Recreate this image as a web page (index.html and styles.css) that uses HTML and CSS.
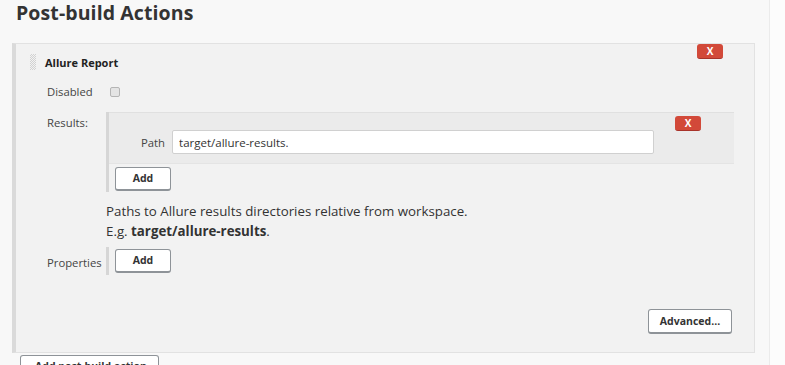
FILE: index.html
```html
<!DOCTYPE html>
<html lang="en">
<head>
  <meta charset="UTF-8">
  <title>Post-build Actions</title>
  <link rel="stylesheet" href="styles.css">
</head>
<body>
  <div class="page">
    <h1>Post-build Actions</h1>
    <div class="section">
      <button class="del del-top" type="button">X</button>
      <div class="section-head">
        <span class="handle"></span>
        <b>Allure Report</b>
      </div>
      <div class="rows">
        <div class="lbl lbl-disabled">Disabled</div>
        <div class="val val-disabled"><span class="check"></span></div>

        <div class="lbl lbl-results">Results:</div>
        <div class="val">
          <div class="repeat">
            <div class="chunk">
              <button class="del del-inner" type="button">X</button>
              <div class="path-row">
                <span class="path-lbl">Path</span>
                <input class="path-input" type="text" value="target/allure-results.">
              </div>
            </div>
            <button class="btn btn-add" type="button">Add</button>
          </div>
        </div>

        <div></div>
        <div class="help">
          Paths to Allure results directories relative from workspace.<br>
          E.g. <b>target/allure-results</b>.
        </div>

        <div class="lbl lbl-props">Properties</div>
        <div class="val">
          <div class="repeat repeat-props">
            <button class="btn btn-add" type="button">Add</button>
          </div>
        </div>
      </div>
      <div class="adv-row">
        <button class="btn btn-adv" type="button">Advanced...</button>
      </div>
    </div>
    <button class="btn btn-post" type="button">Add post-build action</button>
  </div>
</body>
</html>
```

FILE: styles.css
```css
body { margin: 0; background: #fcfcfc; font-family: "Open Sans", "Noto Sans", sans-serif; color: #333; overflow: hidden; }
.page { width: 769px; height: 365px; background: #f8f8f8; border-right: 1px solid #ebebeb; }
h1 { margin: 0 0 18px; padding: 1px 0 0 16px; font-size: 19.5px; line-height: 24px; font-weight: 700; color: #333; letter-spacing: 0.1px; }

.section { position: relative; margin: 0 0 2px 12px; width: 738px; background: #f2f2f2; border: 1px solid #e2e2e2; border-left: 4px solid #dadada; padding-bottom: 18px; }
.section-head { display: flex; align-items: center; gap: 9px; padding: 11px 0 0 14px; height: 25px; box-sizing: border-box; font-size: 11px; }
.section-head b { font-weight: 700; color: #222; }
.handle { width: 6px; height: 16px; background: repeating-conic-gradient(#d2d2d2 0 25%, transparent 0 50%) 0 0 / 2px 2px; }

.del { position: absolute; width: 26px; height: 15px; padding: 0; border: 0; border-bottom: 1px solid #a8332a; border-radius: 3px; background: #d24939; color: #fff; font: 700 10px/14px "Open Sans", sans-serif; cursor: pointer; }
.del-top { top: 0; right: 31px; }
.del-inner { top: 3px; right: 33px; }

.rows { display: grid; grid-template-columns: 59px 1fr; padding: 0 0 0 31px; font-size: 11.3px; }
.lbl { line-height: 20px; color: #444; }
.lbl-disabled { margin-top: 11px; height: 22px; line-height: 24px; }
.val-disabled { margin-top: 11px; height: 22px; display: flex; align-items: center; padding-top: 2px; box-sizing: border-box; }
.check { margin-left: 4px; width: 8px; height: 8px; border: 1px solid #b5b5b5; border-radius: 2px; background: #e4e4e4; }
.lbl-results { margin-top: 10px; padding-top: 1px; }
.val { padding-right: 20px; }
.repeat { margin-top: 10px; border-left: 3px solid #d6d6d6; padding-bottom: 1px; }
.chunk { position: relative; background: #ebebeb; border-top: 1px solid #e0e0e0; border-bottom: 1px solid #e4e4e4; padding: 17px 0 9px 32px; }
.path-row { display: flex; align-items: center; gap: 7px; }
.path-lbl { color: #444; font-size: 11.3px; }
.path-input { width: 482px; height: 24px; box-sizing: border-box; border: 1px solid #d0d0d0; border-radius: 2px; background: #fff; padding: 0 6px; font: 11.5px "Open Sans", sans-serif; color: #333; }

.btn { display: block; background: #fff; border: 1px solid #8e9398; border-bottom-width: 2px; border-radius: 3px; font: 700 10.5px/1 "Open Sans", sans-serif; color: #333; cursor: pointer; }
.btn-add { width: 56px; height: 24px; margin: 3px 0 0 6px; }

.help { margin-top: 10px; font-size: 13.3px; line-height: 19.5px; color: #333; }
.help b { font-weight: 700; }
.lbl-props { margin-top: 7px; padding-top: 5px; }
.repeat-props { margin-top: 6px; padding: 1px 0 2px; }
.repeat-props .btn-add { margin-top: 1px; }

.adv-row { display: flex; justify-content: flex-end; padding: 34px 22px 0 0; }
.btn-adv { width: 84px; height: 25px; }

.btn-post { margin: 2px 0 0 20px; width: 139px; height: 24px; text-align: left; padding-left: 14px; }
```
